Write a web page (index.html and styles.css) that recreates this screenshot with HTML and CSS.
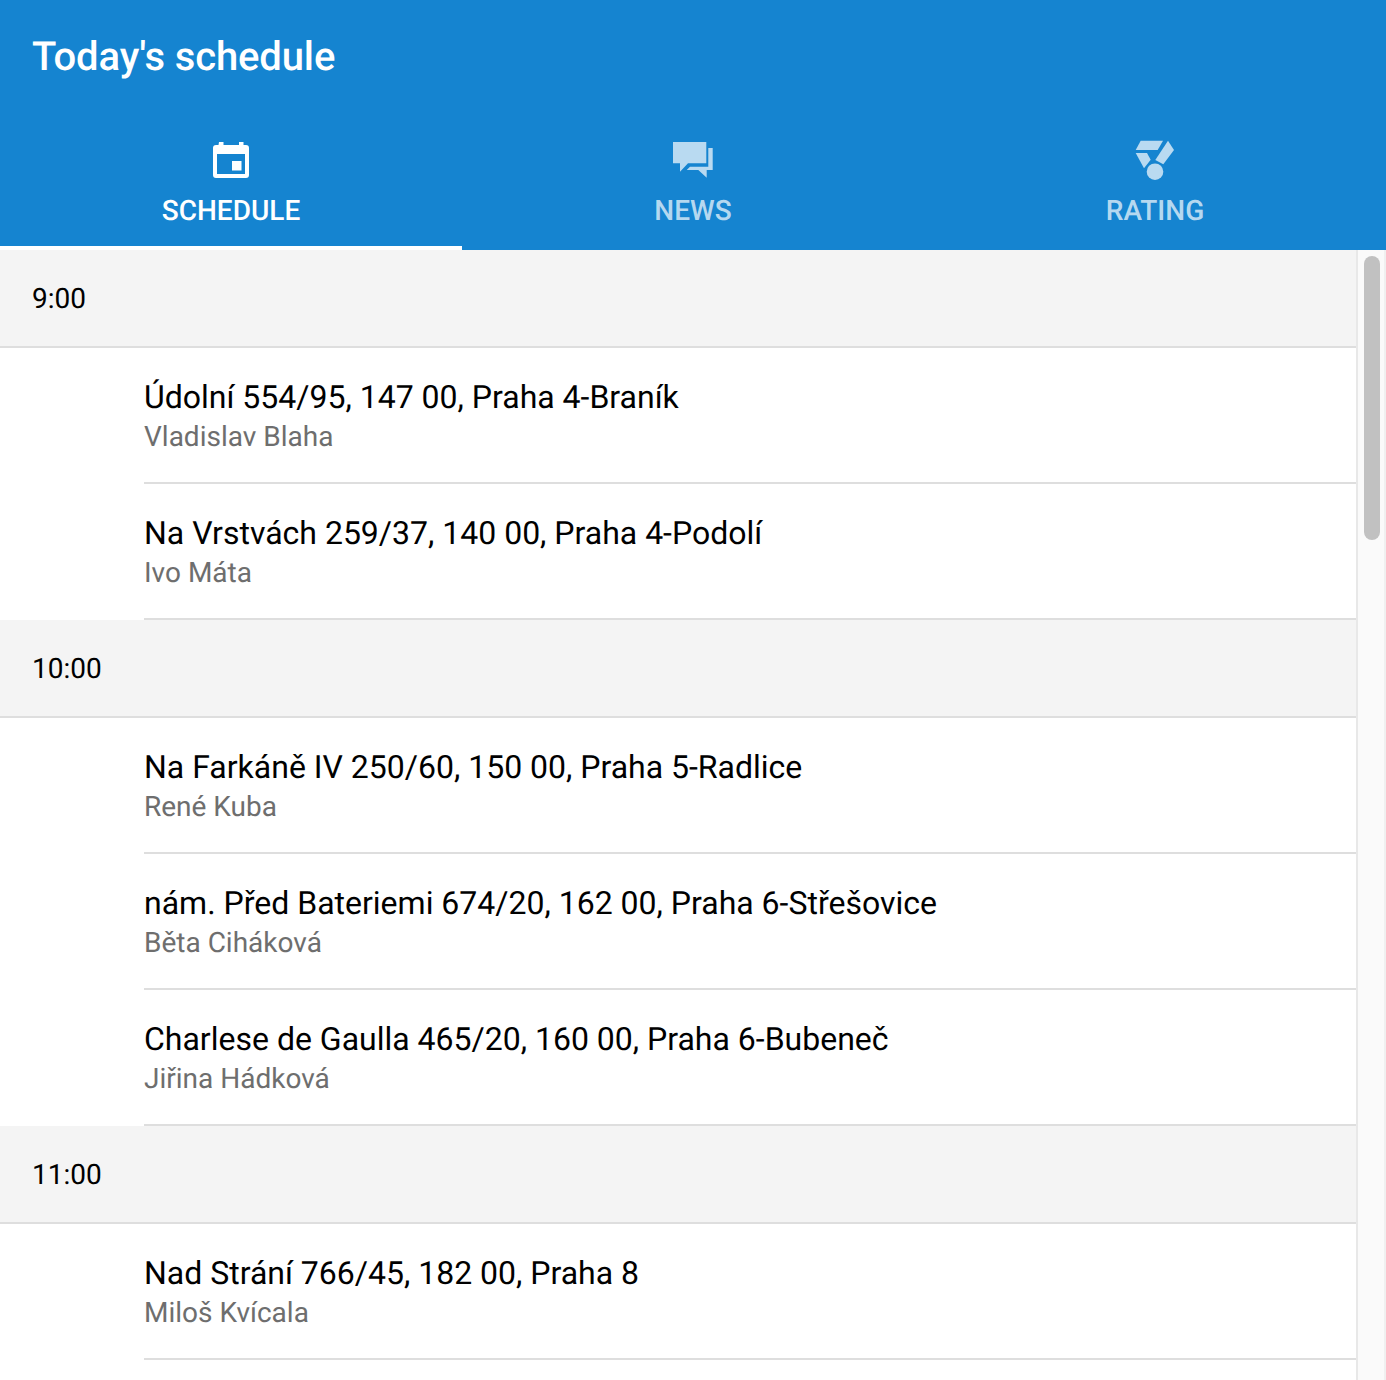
FILE: index.html
```html
<!DOCTYPE html>
<html lang="en">
<head>
	<meta charset="UTF-8">
	<title>Today's schedule</title>
	<link rel="stylesheet" href="styles.css">
</head>
<body>
	<header class="header">
		<div class="toolbar">Today's schedule</div>
		<nav class="tabs">
			<div class="tab active">
				<svg class="tab-icon" viewBox="0 0 48 48">
					<path fill-rule="evenodd" d="M12 6h4.500v3h15.500v-3h4.500v3h2.500a3 3 0 0 1 3 3v27a3 3 0 0 1-3 3h-30a3 3 0 0 1-3-3v-27a3 3 0 0 1 3-3h2.500zM10 18v20h28v-20zM25 25h9.500v9.500h-9.500z"/>
				</svg>
				<span>SCHEDULE</span>
			</div>
			<div class="tab">
				<svg class="tab-icon" viewBox="0 0 48 48">
					<path d="M4 6h33.300v21.300h-18.300l-8 8.400v-8.400h-7z"/>
					<path d="M39.300 12h4.400v22h-6v7.700l-8.400-7.700h-11.600l3.300-3.300h18.300z"/>
				</svg>
				<span>NEWS</span>
			</div>
			<div class="tab">
				<svg class="tab-icon" viewBox="0 0 48 48">
					<path d="M9.700 4.700h22.300l-5.300 9.300h-22z"/>
					<path d="M4.700 17h11.300l3.700 6.700-6.700 8.600z"/>
					<path d="M37 4.700l6 9.300-10.700 14.300-8-4.300z"/>
					<circle cx="24" cy="35.700" r="8.300"/>
				</svg>
				<span>RATING</span>
			</div>
		</nav>
	</header>
	<div class="content">
		<main class="list">
			<div class="time">9:00</div>
			<div class="item">
				<div class="address">Údolní 554/95, 147 00, Praha 4-Braník</div>
				<div class="person">Vladislav Blaha</div>
			</div>
			<div class="item">
				<div class="address">Na Vrstvách 259/37, 140 00, Praha 4-Podolí</div>
				<div class="person">Ivo Máta</div>
			</div>
			<div class="time">10:00</div>
			<div class="item">
				<div class="address">Na Farkáně IV 250/60, 150 00, Praha 5-Radlice</div>
				<div class="person">René Kuba</div>
			</div>
			<div class="item">
				<div class="address">nám. Před Bateriemi 674/20, 162 00, Praha 6-Střešovice</div>
				<div class="person">Běta Ciháková</div>
			</div>
			<div class="item">
				<div class="address">Charlese de Gaulla 465/20, 160 00, Praha 6-Bubeneč</div>
				<div class="person">Jiřina Hádková</div>
			</div>
			<div class="time">11:00</div>
			<div class="item">
				<div class="address">Nad Strání 766/45, 182 00, Praha 8</div>
				<div class="person">Miloš Kvícala</div>
			</div>
		</main>
		<div class="scrollbar">
			<div class="thumb"></div>
		</div>
	</div>
</body>
</html>
```

FILE: styles.css
```css
html, body {
	height: 100%;
}
body {
	margin: 0;
	display: flex;
	flex-direction: column;
	overflow: hidden;
	background: white;
	font-family: Roboto, sans-serif;
	text-rendering: geometricPrecision;
}
.header {
	flex: none;
	height: 250px;
	background: #1584d0;
	color: white;
}
.toolbar {
	height: 112px;
	padding-left: 32px;
	font-size: 40px;
	font-weight: 500;
	letter-spacing: -0.12px;
	line-height: 114px;
}
.tabs {
	display: flex;
}
.tab {
	flex: 1;
	box-sizing: border-box;
	height: 138px;
	padding-top: 24px;
	border-bottom: 4px solid transparent;
	display: flex;
	flex-direction: column;
	align-items: center;
	font-size: 28px;
	font-weight: 500;
	line-height: 48px;
	color: rgba(255, 255, 255, 0.7);
}
.tab.active {
	border-bottom-color: white;
	color: white;
}
.tab-icon {
	width: 48px;
	height: 48px;
	margin-bottom: 3px;
	fill: currentColor;
}
.content {
	flex: 1;
	min-height: 0;
	display: flex;
}
.list {
	flex: 1;
	min-width: 0;
}
.time {
	box-sizing: border-box;
	height: 98px;
	padding-left: 32px;
	background: #f4f4f4;
	border-bottom: 2px solid #dedede;
	font-size: 28px;
	line-height: 98px;
	color: black;
}
.item {
	height: 134px;
	margin-left: 144px;
	border-bottom: 2px solid #dedede;
	box-sizing: content-box;
}
.address {
	padding-top: 29px;
	font-size: 32px;
	line-height: 40px;
	color: black;
}
.person {
	font-size: 28px;
	line-height: 40px;
	color: #6e6e6e;
}
.scrollbar {
	flex: none;
	box-sizing: border-box;
	width: 30px;
	padding: 6px 4px 0 6px;
	background: #fafafa;
	border-left: 2px solid #e8e8e8;
	border-right: 2px solid #f0f0f0;
}
.thumb {
	height: 284px;
	border-radius: 8px;
	background: #c1c1c1;
}
```
